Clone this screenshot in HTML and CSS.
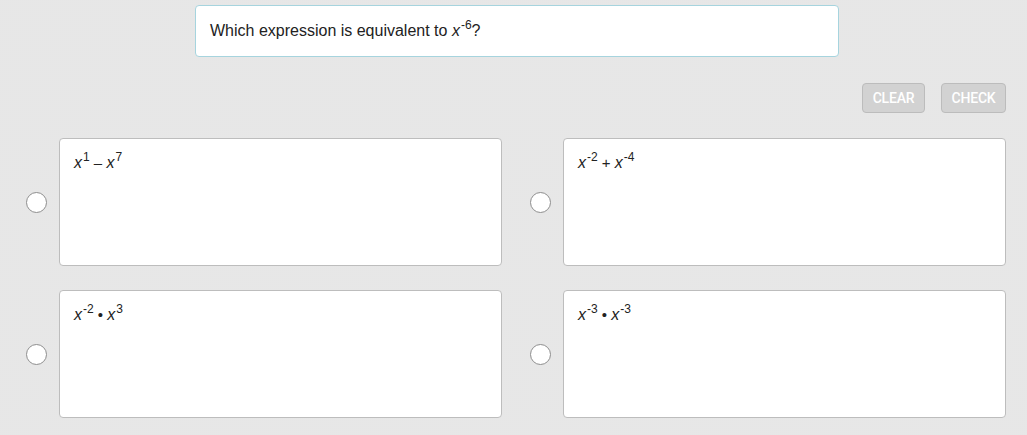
FILE: index.html
```html
<!DOCTYPE html>
<html>
<head>
<meta charset="utf-8">
<link rel="stylesheet" href="styles.css">
</head>
<body>
<div class="page">
  <div class="question">Which expression is equivalent to <i class="v">x</i><sup>-6</sup>?</div>
  <div class="toolbar">
    <button class="btn">CLEAR</button>
    <button class="btn">CHECK</button>
  </div>
  <div class="options">
    <div class="option">
      <span class="radio"></span>
      <div class="card"><i class="v">x</i><sup>1</sup> – <i class="v">x</i><sup>7</sup></div>
    </div>
    <div class="option">
      <span class="radio"></span>
      <div class="card"><i class="v">x</i><sup>-2</sup> + <i class="v">x</i><sup>-4</sup></div>
    </div>
    <div class="option">
      <span class="radio"></span>
      <div class="card"><i class="v">x</i><sup>-2</sup> • <i class="v">x</i><sup>3</sup></div>
    </div>
    <div class="option">
      <span class="radio"></span>
      <div class="card"><i class="v">x</i><sup>-3</sup> • <i class="v">x</i><sup>-3</sup></div>
    </div>
  </div>
</div>
</body>
</html>
```

FILE: styles.css
```css
html, body {
  margin: 0;
  padding: 0;
}
body {
  width: 1027px;
  height: 435px;
  overflow: hidden;
  background-color: #eaeaea;
  background-image: radial-gradient(#e2e2e2 0.6px, transparent 0.8px);
  background-size: 2px 2px;
  font-family: "Liberation Sans", Arial, sans-serif;
  color: #222;
}
.page {
  padding-top: 5px;
}
.question {
  margin-left: 195px;
  width: 644px;
  height: 52px;
  box-sizing: border-box;
  background: #fff;
  border: 1px solid #a6d4de;
  border-radius: 4px;
  padding-left: 14px;
  font-size: 16px;
  line-height: 50px;
  color: #222;
}
.question sup, .card sup {
  font-size: 12px;
  vertical-align: 0;
  position: relative;
  top: -7px;
  margin-left: 1px;
}
.v {
  font-style: italic;
  font-size: 16px;
}
.toolbar {
  display: flex;
  justify-content: flex-end;
  gap: 16px;
  padding-right: 21px;
  margin-top: 26px;
}
.btn {
  height: 30px;
  box-sizing: border-box;
  background: #d2d2d2;
  border: 1px solid #bcbcbc;
  border-radius: 4px;
  color: #fff;
  font-family: Roboto, "Liberation Sans", sans-serif;
  font-weight: 500;
  font-size: 14px;
  padding: 0 8px;
  letter-spacing: -0.2px;
}
.btn:first-child {
  width: 63px;
}
.btn:last-child {
  width: 65px;
}
.options {
  display: grid;
  grid-template-columns: 504px 504px;
  row-gap: 24px;
  margin-top: 25px;
}
.option {
  display: flex;
  align-items: center;
  padding-left: 26px;
}
.radio {
  width: 21px;
  height: 21px;
  box-sizing: border-box;
  border: 1px solid #8e8e8e;
  border-radius: 50%;
  background: #fff;
  flex: none;
  margin-right: 12px;
}
.card {
  width: 443px;
  height: 128px;
  box-sizing: border-box;
  background: #fff;
  border: 1px solid #bdbdbd;
  border-radius: 4px;
  padding: 13px 14px;
  font-size: 15px;
  line-height: 22px;
  color: #222;
}
```
